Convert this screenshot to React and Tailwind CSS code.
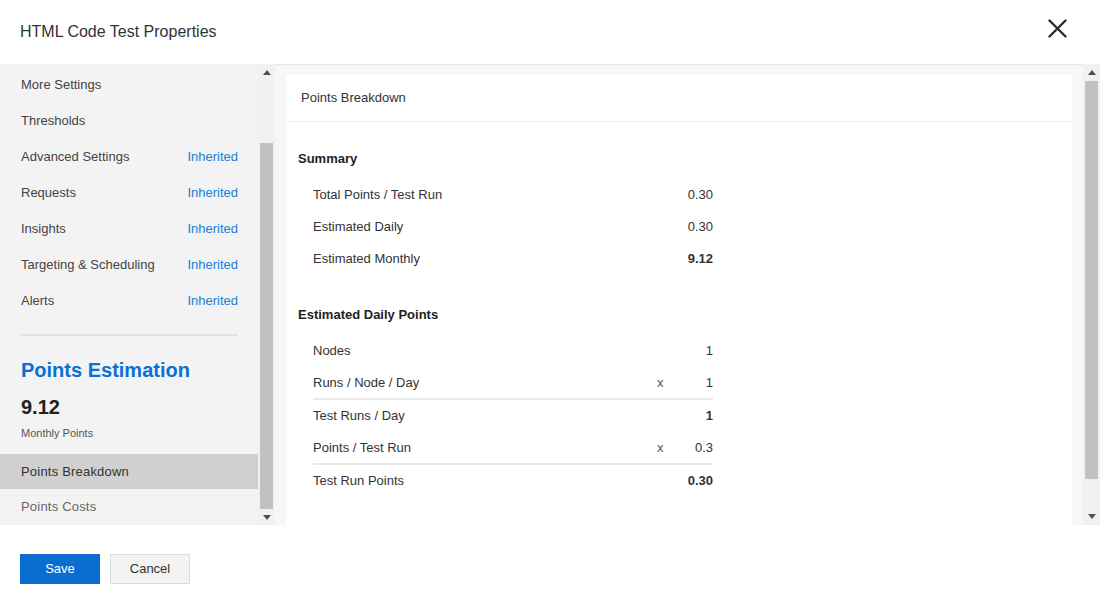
import React from 'react'

const navItems = [
  { label: 'More Settings' },
  { label: 'Thresholds' },
  { label: 'Advanced Settings', tag: 'Inherited' },
  { label: 'Requests', tag: 'Inherited' },
  { label: 'Insights', tag: 'Inherited' },
  { label: 'Targeting & Scheduling', tag: 'Inherited' },
  { label: 'Alerts', tag: 'Inherited' },
]

function ArrowUp() {
  return (
    <svg width="8" height="5" viewBox="0 0 8 5"><path d="M0 5 L4 0 L8 5 Z" fill="#505050" /></svg>
  )
}

function ArrowDown() {
  return (
    <svg width="8" height="5" viewBox="0 0 8 5"><path d="M0 0 L8 0 L4 5 Z" fill="#505050" /></svg>
  )
}

function Scrollbar({ thumbTop, thumbHeight }) {
  return (
    <div className="w-[17px] shrink-0 bg-[#f1f1f1] flex flex-col">
      <div className="h-[17px] flex items-center justify-center"><ArrowUp /></div>
      <div className="flex-1 px-[2px]">
        <div className={`bg-[#c1c1c1] ${thumbTop} ${thumbHeight}`}></div>
      </div>
      <div className="h-[17px] flex items-center justify-center"><ArrowDown /></div>
    </div>
  )
}

function Row({ label, value, mult, bold, border }) {
  return (
    <div className={`flex items-center text-[13px] text-[#333] ${border ? 'h-[33px] border-b-2 border-[#e8e8e8]' : 'h-8'}`}>
      <span className="flex-1">{label}</span>
      <span className="w-[20px] text-[#555]">{mult ? 'x' : ''}</span>
      <span className={`w-[36px] text-right ${bold ? 'font-bold' : ''}`}>{value}</span>
    </div>
  )
}

export default function App() {
  return (
    <div className="w-[1100px] h-[600px] bg-white flex flex-col overflow-hidden font-['Liberation_Sans',Arial,sans-serif]">
      {/* Header */}
      <div className="h-16 shrink-0 flex items-center justify-between pl-5 pr-[33px]">
        <h1 className="text-[16px] text-[#333]">HTML Code Test Properties</h1>
        <svg width="19" height="19" viewBox="0 0 19 19" className="mb-[8px]">
          <path d="M1.5 1.5 L17.5 17.5 M17.5 1.5 L1.5 17.5" stroke="#2b2b2b" strokeWidth="2.4" strokeLinecap="round" />
        </svg>
      </div>

      {/* Body */}
      <div className="h-[461px] shrink-0 flex">
        <div className="w-[258px] shrink-0 bg-[#f3f3f3] flex flex-col pt-[3px] overflow-hidden">
          <div className="pl-[21px] pr-5">
            {navItems.map((item) => (
              <div key={item.label} className="h-9 flex items-center justify-between text-[13px]">
                <span className="text-[#444]">{item.label}</span>
                {item.tag && <span className="text-[#1a7ed6]">{item.tag}</span>}
              </div>
            ))}
            <div className="mt-[15px] border-t-2 border-[#e2e2e2]"></div>
            <div className="pt-[22px] text-[20px] font-bold text-[#0a6fd6] leading-6">Points Estimation</div>
            <div className="pt-[13px] text-[20px] font-bold text-[#222] leading-6">9.12</div>
            <div className="pt-[6px] text-[11px] text-[#555] leading-4">Monthly Points</div>
          </div>
          <div className="mt-[13px] h-[35px] bg-[#d0d0d0] flex items-center pl-[21px] text-[13px] font-medium text-[#333] tracking-[0.2px]">Points Breakdown</div>
          <div className="h-9 flex items-center pl-[21px] text-[13px] text-[#666] tracking-[0.2px]">Points Costs</div>
        </div>

        <Scrollbar thumbTop="mt-[63px]" thumbHeight="h-[366px]" />

        <div className="flex-1 bg-[#f7f7f7] border-t border-[#e6e6e6] pt-[10px] px-[11px] overflow-hidden">
          <div className="bg-white h-full">
            <div className="h-[47px] flex items-center px-[15px] border-b border-[#eeeeee] text-[13px] text-[#333]">Points Breakdown</div>
            <div className="pl-3 pt-[27px]">
              <h2 className="text-[13px] font-bold text-[#222] h-[20px] flex items-center">Summary</h2>
              <div className="w-[415px] pl-[15px] mt-[10px]">
                <Row label="Total Points / Test Run" value="0.30" />
                <Row label="Estimated Daily" value="0.30" />
                <Row label="Estimated Monthly" value="9.12" bold />
              </div>
              <h2 className="mt-[30px] text-[13px] font-bold text-[#222] h-[20px] flex items-center">Estimated Daily Points</h2>
              <div className="w-[415px] pl-[15px] mt-[10px]">
                <Row label="Nodes" value="1" />
                <Row label="Runs / Node / Day" value="1" mult border />
                <Row label="Test Runs / Day" value="1" bold />
                <Row label="Points / Test Run" value="0.3" mult border />
                <Row label="Test Run Points" value="0.30" bold />
              </div>
            </div>
          </div>
        </div>

        <Scrollbar thumbTop="mt-[0px]" thumbHeight="h-[398px]" />
      </div>

      {/* Footer */}
      <div className="flex-1 flex items-start gap-[10px] px-5 pt-[29px]">
        <button className="w-20 h-[30px] bg-[#0a6ed1] text-white text-[13px]">Save</button>
        <button className="w-20 h-[30px] bg-[#f3f3f3] border border-[#dcdcdc] text-[#333] text-[13px]">Cancel</button>
      </div>
    </div>
  )
}
